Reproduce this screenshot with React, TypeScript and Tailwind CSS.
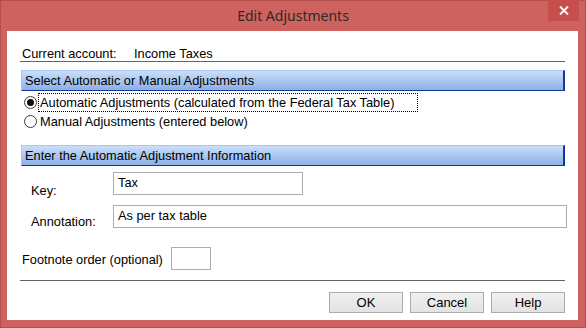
import React from 'react';

const SectionHeader: React.FC<{ title: string; className?: string }> = ({ title, className }) => (
  <div
    className={`ml-[14px] mr-[13px] h-[21px] flex items-center pl-[3px] border-t border-l border-t-[#a9c6f2] border-l-[#a9c6f2] border-r-2 border-b border-r-[#16379c] border-b-[#16379c] bg-gradient-to-b from-[#cadff9] to-[#8cb0e6] text-black ${className ?? ''}`}
  >
    {title}
  </div>
);

const Radio: React.FC<{ checked?: boolean; label: string; focused?: boolean }> = ({ checked, label, focused }) => (
  <div className="h-[19px] flex items-center pl-[17px]">
    <div className="w-[13px] h-[13px] rounded-full border border-[#3c3c3c] bg-white flex items-center justify-center shrink-0">
      {checked && <div className="w-[7px] h-[7px] rounded-full bg-[#111]" />}
    </div>
    <div
      className={`ml-[1px] h-[19px] flex items-center pl-[1px] ${
        focused ? 'w-[380px] border border-dotted border-black' : 'border border-transparent'
      }`}
    >
      {label}
    </div>
  </div>
);

const Button: React.FC<{ label: string }> = ({ label }) => (
  <div className="w-[74px] h-[21px] border border-[#acacac] bg-gradient-to-b from-[#f0f0f0] to-[#e3e3e3] flex items-center justify-center text-[13px] text-black">
    {label}
  </div>
);

export default function App() {
  return (
    <div className="w-[586px] h-[328px] bg-[#ce625e] border border-[#b4504c] flex flex-col font-['Liberation_Sans',Arial,sans-serif] text-[12.8px] text-black">
      {/* Title bar */}
      <div className="relative h-[30px] flex items-center justify-center">
        <span className="font-['Noto_Sans',sans-serif] text-[14px] text-[#2b2b2b] -mt-[1px]">Edit Adjustments</span>
        <div className="absolute right-[6px] -top-[1px] w-[31px] h-[21px] bg-[#c74f4b] flex items-center justify-center">
          <svg width="10" height="9" viewBox="0 0 10 9">
            <path d="M1 0.5 L9 8.5 M9 0.5 L1 8.5" stroke="white" strokeWidth="1.8" />
          </svg>
        </div>
      </div>

      {/* Client area */}
      <div className="ml-[6px] mr-[7px] mb-[7px] flex-1 bg-white flex flex-col">
        <div className="mx-[13px] h-[31px] pt-[15px] border-b border-[#646464] flex">
          <span className="pl-[2px] leading-[15px] w-[114px]">Current account:</span>
          <span className="leading-[15px]">Income Taxes</span>
        </div>

        <SectionHeader title="Select Automatic or Manual Adjustments" className="mt-[8px]" />

        <div className="mt-[2px]">
          <Radio checked focused label="Automatic Adjustments (calculated from the Federal Tax Table)" />
          <Radio label="Manual Adjustments (entered below)" />
        </div>

        <SectionHeader title="Enter the Automatic Adjustment Information" className="mt-[14px]" />

        <div className="mt-[7px] flex">
          <div className="w-[106px] pl-[24px] pt-[10px] leading-[15px]">Key:</div>
          <div className="w-[190px] h-[23px] border border-[#abadb3] flex items-center pl-[4px] -mt-[1px] pb-[1px]">Tax</div>
        </div>

        <div className="mt-[7px] flex">
          <div className="w-[106px] pl-[24px] pt-[9px] leading-[15px]">Annotation:</div>
          <div className="w-[454px] h-[23px] border border-[#abadb3] flex items-center pl-[4px] pb-[1px]">As per tax table</div>
        </div>

        <div className="mt-[18px] flex items-center">
          <div className="w-[164px] pl-[15px] pt-[2px] leading-[15px]">Footnote order (optional)</div>
          <div className="w-[40px] h-[23px] border border-[#abadb3]" />
        </div>

        <div className="mx-[13px] mt-[10px] h-px bg-[#646464]" />

        <div className="mt-[11px] mr-[13px] flex justify-end gap-[7px]">
          <Button label="OK" />
          <Button label="Cancel" />
          <Button label="Help" />
        </div>
      </div>
    </div>
  );
}
